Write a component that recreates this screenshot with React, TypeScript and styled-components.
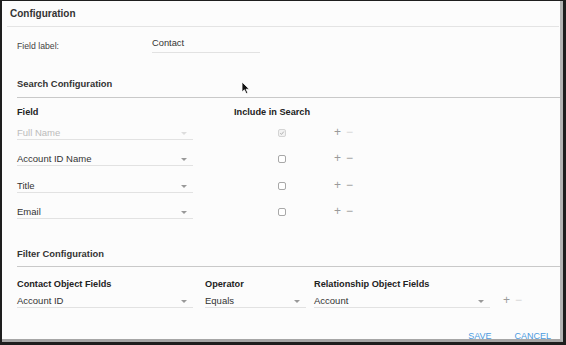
import React from 'react';
import styled, { createGlobalStyle } from 'styled-components';

const GlobalStyle = createGlobalStyle`
  html, body { margin: 0; padding: 0; }
  body {
    background: #1e1e1e;
    font-family: "Liberation Sans", Arial, Helvetica, sans-serif;
    color: #333;
  }
`;

const Frame = styled.div`
  width: 566px;
  height: 345px;
  box-sizing: border-box;
  padding: 1px 3px 3px 2px;
  background: #1e1e1e;
`;

const Window = styled.div`
  position: relative;
  height: 100%;
  box-sizing: border-box;
  background: #fcfcfc;
  border-right: 3px solid #b4b4b4;
  border-bottom: 3px solid #a6a6a6;
  overflow: hidden;
`;

const Header = styled.div`
  height: 25px;
  margin: 0 1px 0 5px;
  padding-left: 3px;
  display: flex;
  align-items: center;
  font-size: 10px;
  font-weight: 700;
  color: #333;
  border-bottom: 1px solid #e4e4e4;
`;

const Body = styled.div`
  padding-left: 15px;
`;

const LabelRow = styled.div`
  display: flex;
  align-items: flex-start;
  margin-top: 10px;
`;

const FieldLabel = styled.div`
  width: 135px;
  font-size: 8.7px;
  line-height: 13px;
  padding-top: 3px;
  color: #444;
`;

const TextInput = styled.div`
  width: 108px;
  height: 16px;
  font-size: 9.3px;
  line-height: 13px;
  box-sizing: border-box;
  color: #333;
  border-bottom: 1px solid #e2e2e2;
`;

const SectionTitle = styled.div<{ $top: number; $height: number }>`
  margin-top: ${(p) => p.$top}px;
  height: ${(p) => p.$height}px;
  line-height: 16px;
  font-size: 9.4px;
  font-weight: 700;
  color: #333;
  border-bottom: 1px solid #c9c9c9;
`;

const HeadRow = styled.div<{ $top: number; $height: number }>`
  display: flex;
  margin-top: ${(p) => p.$top}px;
  height: ${(p) => p.$height}px;
  line-height: 16px;
  font-size: 9.2px;
  font-weight: 700;
  color: #222;
`;

const HeadCell = styled.div<{ $width: number }>`
  width: ${(p) => p.$width}px;
  flex: none;
`;

const Row = styled.div<{ $top: number }>`
  display: flex;
  align-items: flex-start;
  margin-top: ${(p) => p.$top}px;
`;

const Select = styled.div<{ $width: number; $disabled?: boolean }>`
  width: ${(p) => p.$width}px;
  flex: none;
  height: 19px;
  box-sizing: border-box;
  padding: 6px 6px 0 0;
  display: flex;
  justify-content: space-between;
  font-size: 9.5px;
  line-height: 12px;
  color: ${(p) => (p.$disabled ? '#bbb' : '#333')};
  border-bottom: 1px solid #e2e2e2;
`;

const Chevron = styled.span<{ $disabled?: boolean }>`
  width: 0;
  height: 0;
  margin-top: 5px;
  border-left: 3px solid transparent;
  border-right: 3px solid transparent;
  border-top: 3px solid ${(p) => (p.$disabled ? '#ddd' : '#999')};
`;

const Gap = styled.div<{ $width: number }>`
  width: ${(p) => p.$width}px;
  flex: none;
`;

const CheckCell = styled.div`
  width: 100px;
  flex: none;
  padding: 8px 0 0 44px;
  box-sizing: border-box;
`;

const Checkbox = styled.span<{ $checked?: boolean }>`
  display: block;
  width: 8px;
  height: 8px;
  box-sizing: border-box;
  border: 1px solid ${(p) => (p.$checked ? '#d4d4d4' : '#a8a8a8')};
  border-radius: 2px;
  background: ${(p) => (p.$checked ? '#f2f2f2' : '#fff')};
  position: relative;
  svg { position: absolute; left: 0; top: 0; }
`;

const Actions = styled.div`
  display: flex;
  gap: 5px;
  padding-top: 4px;
  font-size: 12px;
  line-height: 14px;
`;

const Sign = styled.span<{ $disabled?: boolean }>`
  color: ${(p) => (p.$disabled ? '#d6d6d6' : '#9a9a9a')};
`;

const Footer = styled.div`
  display: flex;
  justify-content: flex-end;
  gap: 23px;
  margin-top: 22px;
  padding-right: 9px;
  font-size: 9px;
  line-height: 12px;
  color: #4a9ae0;
`;

const Cursor = styled.svg`
  position: absolute;
  left: 239px;
  top: 80px;
`;

const searchRows = [
  { name: 'Full Name', disabled: true, top: 1 },
  { name: 'Account ID Name', top: 7 },
  { name: 'Title', top: 8 },
  { name: 'Email', top: 7 },
];

const PlusMinus = ({ minusDisabled }: { minusDisabled?: boolean }) => (
  <Actions>
    <Sign>+</Sign>
    <Sign $disabled={minusDisabled}>−</Sign>
  </Actions>
);

export default function App() {
  return (
    <Frame>
      <GlobalStyle />
      <Window>
        <Header>Configuration</Header>
        <Body>
          <LabelRow>
            <FieldLabel>Field label:</FieldLabel>
            <TextInput>Contact</TextInput>
          </LabelRow>

          <SectionTitle $top={23} $height={21}>Search Configuration</SectionTitle>
          <HeadRow $top={6} $height={16}>
            <HeadCell $width={217}>Field</HeadCell>
            <HeadCell $width={120}>Include in Search</HeadCell>
          </HeadRow>
          {searchRows.map((r) => (
            <Row key={r.name} $top={r.top}>
              <Select $width={176} $disabled={r.disabled}>
                {r.name}
                <Chevron $disabled={r.disabled} />
              </Select>
              <Gap $width={41} />
              <CheckCell>
                <Checkbox $checked={r.disabled}>
                  {r.disabled && (
                    <svg width="6" height="6" viewBox="0 0 6 6">
                      <path d="M1.2 3.2 L2.5 4.4 L4.8 1.6" stroke="#aaa" strokeWidth="0.9" fill="none" />
                    </svg>
                  )}
                </Checkbox>
              </CheckCell>
              <PlusMinus minusDisabled={r.disabled} />
            </Row>
          ))}

          <SectionTitle $top={27} $height={20}>Filter Configuration</SectionTitle>
          <HeadRow $top={9} $height={13}>
            <HeadCell $width={188}>Contact Object Fields</HeadCell>
            <HeadCell $width={109}>Operator</HeadCell>
            <HeadCell $width={180}>Relationship Object Fields</HeadCell>
          </HeadRow>
          <Row $top={0}>
            <Select $width={176}>
              Account ID
              <Chevron />
            </Select>
            <Gap $width={12} />
            <Select $width={101}>
              Equals
              <Chevron />
            </Select>
            <Gap $width={8} />
            <Select $width={176}>
              Account
              <Chevron />
            </Select>
            <Gap $width={13} />
            <PlusMinus minusDisabled />
          </Row>

          <Footer>
            <span>SAVE</span>
            <span>CANCEL</span>
          </Footer>
        </Body>
        <Cursor width="10" height="14" viewBox="0 0 10 14">
          <path d="M1 1 L1 11 L3.4 8.8 L5.2 12.6 L6.8 11.9 L5.1 8.2 L8.3 8.2 Z" fill="#111" stroke="#fff" strokeWidth="0.8" />
        </Cursor>
      </Window>
    </Frame>
  );
}
